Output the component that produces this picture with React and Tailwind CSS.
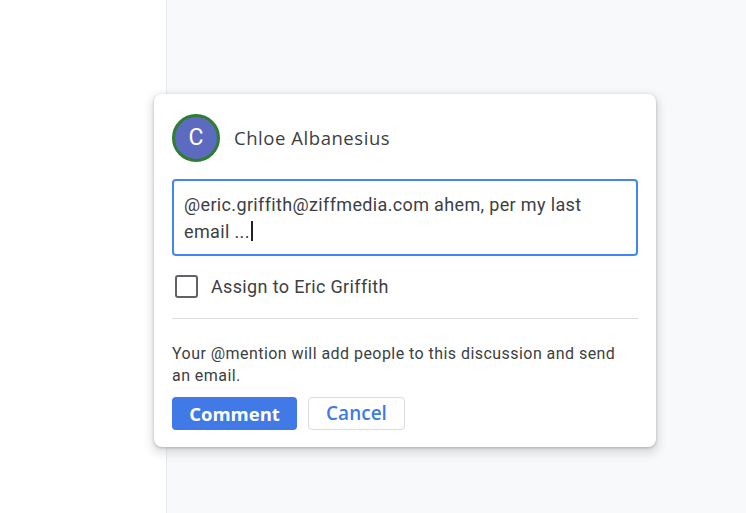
// Comment popup with @mention, over a doc page
export default function App() {
  return (
    <div className="relative flex h-[513px] w-[746px] overflow-hidden bg-[#f8f9fa] font-['Roboto',sans-serif]">
      {/* left white pane */}
      <div className="h-full w-[167px] border-r border-[#e8eaed] bg-white" />
      <div className="flex-1" />

      {/* comment popup */}
      <div className="absolute left-[154px] top-[94px] w-[502px] rounded-lg bg-white px-[18px] pb-[17px] pt-[20px] shadow-[0_1px_3px_rgba(60,64,67,0.3),0_4px_8px_3px_rgba(60,64,67,0.15)]">
        <div className="flex items-center gap-[14px]">
          <div className="flex h-[48px] w-[48px] items-center justify-center rounded-full border-[3px] border-[#2e7d32] bg-[#5c6bc0] text-[23px] text-white">
            C
          </div>
          <span className="font-['Open_Sans',sans-serif] text-[18.5px] tracking-[0.55px] text-[#3c4043]">Chloe Albanesius</span>
        </div>

        <div className="mt-[17px] h-[77px] rounded-[4px] border-2 border-[#4285f4] px-[10px] pt-[10px] text-[18px] leading-[27px] tracking-[0.35px] text-[#3c4043]">
          @eric.griffith@ziffmedia.com ahem, per my last
          <br />
          email ...
          <span className="ml-[1px] inline-block h-[20px] w-[2px] translate-y-[3px] bg-[#202124]" />
        </div>

        <label className="mt-[17px] flex items-center gap-[13px] pl-[3px]">
          <span className="h-[23px] w-[23px] rounded-[3px] border-2 border-[#5f6368]" />
          <span className="text-[18px] tracking-[0.35px] text-[#3c4043]">Assign to Eric Griffith</span>
        </label>

        <div className="mt-[18px] border-t border-[#dadce0]" />

        <p className="mt-[24px] text-[16px] leading-[22px] tracking-[0.45px] text-[#3c4043]">
          Your @mention will add people to this discussion and send an email.
        </p>

        <div className="mt-[10px] flex gap-[11px]">
          <button className="h-[33px] w-[125px] rounded-[4px] bg-[#4179e6] font-['Open_Sans',sans-serif] text-[18.5px] font-bold text-white">
            Comment
          </button>
          <button className="h-[33px] w-[97px] rounded-[4px] border border-[#dadce0] bg-white font-['Open_Sans',sans-serif] text-[19px] font-semibold text-[#4179e6]">
            Cancel
          </button>
        </div>
      </div>
    </div>
  );
}
